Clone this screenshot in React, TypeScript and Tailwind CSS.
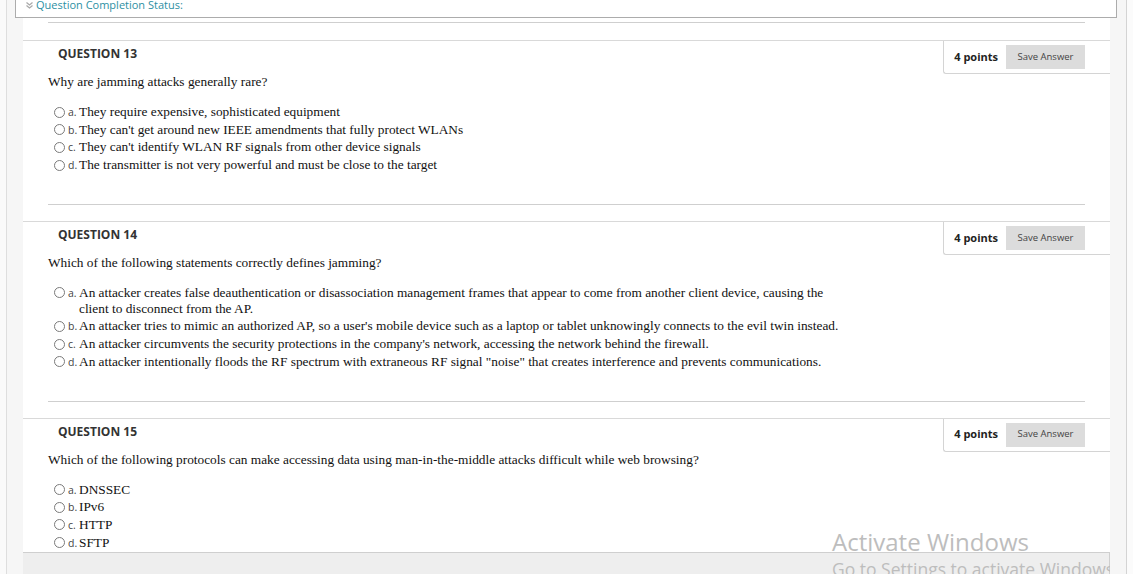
import React from "react";

const sans = { fontFamily: '"Open Sans", "Liberation Sans", sans-serif' };
const serif = { fontFamily: '"Liberation Serif", "Times New Roman", serif' };

type Q = { n: number; text: string; options: string[] };

const questions: Q[] = [
  {
    n: 13,
    text: "Why are jamming attacks generally rare?",
    options: [
      "They require expensive, sophisticated equipment",
      "They can't get around new IEEE amendments that fully protect WLANs",
      "They can't identify WLAN RF signals from other device signals",
      "The transmitter is not very powerful and must be close to the target",
    ],
  },
  {
    n: 14,
    text: "Which of the following statements correctly defines jamming?",
    options: [
      "An attacker creates false deauthentication or disassociation management frames that appear to come from another client device, causing the client to disconnect from the AP.",
      "An attacker tries to mimic an authorized AP, so a user's mobile device such as a laptop or tablet unknowingly connects to the evil twin instead.",
      "An attacker circumvents the security protections in the company's network, accessing the network behind the firewall.",
      "An attacker intentionally floods the RF spectrum with extraneous RF signal \"noise\" that creates interference and prevents communications.",
    ],
  },
  {
    n: 15,
    text: "Which of the following protocols can make accessing data using man-in-the-middle attacks difficult while web browsing?",
    options: ["DNSSEC", "IPv6", "HTTP", "SFTP"],
  },
];

const letters = ["a.", "b.", "c.", "d."];

function Question({ q }: { q: Q }) {
  return (
    <div className="border-t border-[#d9d9d9]">
      <div className="flex h-[33px] items-start justify-between">
        <div
          className="pl-[35px] pt-[4px] text-[12px] font-bold leading-[17px] text-[#333]"
          style={sans}
        >
          QUESTION {q.n}
        </div>
        <div className="flex h-[33px] shrink-0 items-center rounded-bl-[3px] border-b border-l border-[#d4d4d4] pl-[10px] pr-[25px]">
          <span className="whitespace-nowrap text-[11px] font-bold text-[#222]" style={sans}>
            4 points
          </span>
          <button
            className="ml-[8px] flex h-[24px] w-[79px] items-center justify-center whitespace-nowrap bg-[#dcdcdc] text-[9.5px] text-[#444]"
            style={sans}
          >
            Save Answer
          </button>
        </div>
      </div>
      <div className="pl-[25px] text-[13.33px] leading-[15px] text-[#111]" style={serif}>
        {q.text}
      </div>
      <div className="mt-[15px] pl-[31px]">
        {q.options.map((o, i) => (
          <div key={i} className="flex items-start pb-[1.7px]">
            <span className="mt-[2.5px] block h-[11px] w-[11px] shrink-0 rounded-full border border-[#7a7a7a] bg-white" />
            <span
              className="ml-[3px] w-[11px] shrink-0 text-[10.5px] leading-[16px] text-[#444]"
              style={sans}
            >
              {letters[i]}
            </span>
            <span
              className="max-w-[772px] text-[13.33px] leading-[16px] text-[#111]"
              style={serif}
            >
              {o}
            </span>
          </div>
        ))}
      </div>
    </div>
  );
}

export default function App() {
  return (
    <div className="relative flex h-[574px] w-full overflow-hidden bg-white">
      <div className="w-[7px] shrink-0 border-r border-[#dedede] bg-[#fafafa]" />
      <div className="w-[16px] shrink-0 bg-[#f6f6f6]" />
      <div className="relative flex-1 bg-white pt-[22px]">
        <div className="mx-[25px] mb-[17px] border-t border-[#cfcfcf]" />
        {questions.map((q, i) => (
          <div key={q.n}>
            <Question q={q} />
            {i < questions.length - 1 && (
              <div className="mx-[25px] mb-[16px] mt-[29px] border-t border-[#cfcfcf]" />
            )}
          </div>
        ))}
        <div className="absolute bottom-0 left-0 right-0 h-[22px] border-r border-t border-[#cfcfcf] bg-[#eeeeee]" />
        <div className="pointer-events-none absolute inset-0 overflow-hidden">
          <div
            className="absolute left-[809px] top-[525px] whitespace-nowrap text-[#bdbdbd]"
            style={{ fontFamily: '"Open Sans", "Noto Sans", sans-serif' }}
          >
            <div className="text-[24px] leading-[33px]">Activate Windows</div>
            <div className="text-[17.5px] leading-[22px]">Go to Settings to activate Windows.</div>
          </div>
        </div>
      </div>
      <div className="w-[17px] shrink-0 border-r border-[#d4d4d4] bg-[#f6f6f6]" />
      <div className="w-[6px] shrink-0 bg-[#fbfbfb]" />
      <div className="absolute left-[15px] top-0 flex h-[18px] w-[1102px] items-end border-x border-b border-[#acacac] bg-white pb-[5px] pl-[10px]">
        <svg width="7" height="7" viewBox="0 0 7 7" className="mb-[3px] mr-[3px]">
          <path d="M0.5 0.5 L3.5 3 L6.5 0.5" stroke="#aaa" strokeWidth="1.3" fill="none" />
          <path d="M0.5 3.5 L3.5 6 L6.5 3.5" stroke="#aaa" strokeWidth="1.3" fill="none" />
        </svg>
        <span className="text-[11px] leading-[14px] text-[#2d8fa3]" style={sans}>
          Question Completion Status:
        </span>
      </div>
    </div>
  );
}
